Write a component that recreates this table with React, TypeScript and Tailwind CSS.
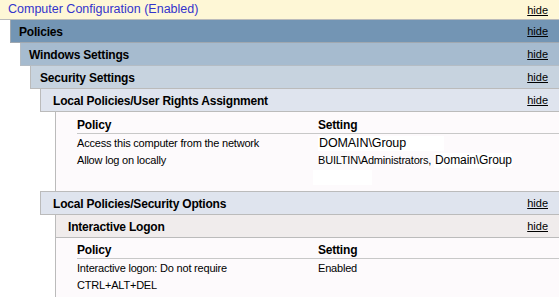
import React from "react";

function Hide() {
  return <span className="text-[11px] font-normal underline text-black leading-none pt-px">hide</span>;
}

function Row({ policy, children }: { policy: string; children: React.ReactNode }) {
  return (
    <>
      <div className="h-[17px] pt-px leading-[16px] text-[11px] tracking-[-0.2px] whitespace-nowrap">{policy}</div>
      <div className="h-[17px] pt-px leading-[16px] text-[11px] tracking-[-0.2px] whitespace-nowrap flex items-center">{children}</div>
    </>
  );
}

function Table({ children }: { children: React.ReactNode }) {
  return (
    <div className="grid grid-cols-[241px_1fr]">
      <div className="h-[17px] pt-px leading-[15px] text-[12px] font-bold tracking-[-0.2px] border-b border-[#C8C8C8]">Policy</div>
      <div className="h-[17px] pt-px leading-[15px] text-[12px] font-bold tracking-[-0.2px] border-b border-[#C8C8C8]">Setting</div>
      {children}
    </div>
  );
}

export default function App() {
  return (
    <div className="w-[559px] h-[297px] overflow-hidden bg-white text-black font-['Liberation_Sans',Arial,sans-serif] flex flex-col">
      <div className="h-[20px] shrink-0 flex items-center justify-between bg-[#FEF7D6] border-b border-[#BBBBBB] pl-[8px] pr-[11px]">
        <span className="text-[12.5px] text-[#3333CC]">Computer Configuration (Enabled)</span>
        <Hide />
      </div>
      <div className="ml-[10px] h-[23px] shrink-0 flex items-center justify-between bg-[#7395B4] border-l border-b border-[#A0A8B0] pl-[8px] pr-[11px]">
        <span className="text-[12px] font-bold tracking-[-0.2px] pt-px">Policies</span>
        <Hide />
      </div>
      <div className="ml-[20px] h-[23px] shrink-0 flex items-center justify-between bg-[#A6BBCF] border-l border-b border-[#B4BCC4] pl-[8px] pr-[11px]">
        <span className="text-[12px] font-bold tracking-[-0.2px] pt-px">Windows Settings</span>
        <Hide />
      </div>
      <div className="ml-[30px] h-[23px] shrink-0 flex items-center justify-between bg-[#C7D3DF] border-l border-b border-[#BBBBBB] pl-[9px] pr-[11px]">
        <span className="text-[12px] font-bold tracking-[-0.2px] pt-px">Security Settings</span>
        <Hide />
      </div>
      <div className="ml-[40px] h-[23px] shrink-0 flex items-center justify-between bg-[#DFE4EE] border-l border-b border-[#BBBBBB] pl-[12px] pr-[11px]">
        <span className="text-[12px] font-bold tracking-[-0.2px] pt-px">Local Policies/User Rights Assignment</span>
        <Hide />
      </div>
      <div className="ml-[55px] h-[79px] shrink-0 border-l border-[#BBBBBB] bg-[#FDFAFC] pl-[21px] pt-[5px]">
        <Table>
          <Row policy="Access this computer from the network">
            <span className="bg-white text-[12.5px] tracking-[-0.1px] pl-px pr-[38px] leading-[15px]">DOMAIN\Group</span>
          </Row>
          <Row policy="Allow log on locally">
            <span>BUILTIN\Administrators,&nbsp;</span>
            <span className="bg-white text-[12px] tracking-[-0.1px] pl-px leading-[15px]">Domain\Group</span>
          </Row>
          <div />
          <div className="h-[15px] mt-[2px] -ml-[5px] w-[59px] bg-white" />
        </Table>
      </div>
      <div className="ml-[40px] h-[24px] shrink-0 flex items-center justify-between bg-[#DFE4EE] border-l border-t border-b border-[#BBBBBB] pl-[12px] pr-[11px]">
        <span className="text-[12px] font-bold tracking-[-0.2px] pt-px">Local Policies/Security Options</span>
        <Hide />
      </div>
      <div className="ml-[55px] flex-1 border-l border-[#BBBBBB] bg-[#FDFAFC] flex flex-col">
        <div className="h-[23px] shrink-0 flex items-center justify-between bg-[#F0ECEC] border-b border-[#BBBBBB] pl-[12px] pr-[11px]">
          <span className="text-[12px] font-bold tracking-[-0.2px] pt-px">Interactive Logon</span>
          <Hide />
        </div>
        <div className="pl-[21px] pt-[4px]">
          <Table>
            <Row policy="Interactive logon: Do not require">
              <span>Enabled</span>
            </Row>
            <Row policy="CTRL+ALT+DEL">
              <span />
            </Row>
          </Table>
        </div>
      </div>
    </div>
  );
}
